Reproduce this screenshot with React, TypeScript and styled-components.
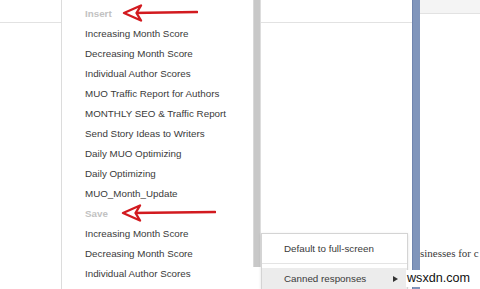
import React from 'react';
import styled, { createGlobalStyle } from 'styled-components';

const GlobalStyle = createGlobalStyle`
    html, body {
        margin: 0;
        padding: 0;
        background: #ffffff;
    }
    body {
        font-family: 'Liberation Sans', Arial, sans-serif;
        overflow: hidden;
    }
`;

const Screen = styled.div`
    position: relative;
    display: flex;
    width: 480px;
    height: 289px;
    overflow: hidden;
    background: #ffffff;
`;

const Gutter = styled.div`
    width: 61px;
    flex-shrink: 0;
`;

const TopRule = styled.div<{ $h: number; $bg?: string }>`
    height: ${(p) => p.$h}px;
    background: ${(p) => p.$bg || 'transparent'};
    border-bottom: solid 1px #e2e2e2;
`;

const Submenu = styled.div`
    width: 191px;
    flex-shrink: 0;
    padding-top: 3px;
    border-left: solid 1px #dcdcdc;
    background: #ffffff;
`;

const Item = styled.div<{ $header?: boolean }>`
    display: flex;
    align-items: center;
    height: 20px;
    padding-left: 23px;
    font-size: 9.8px;
    white-space: nowrap;
    color: ${(p) => (p.$header ? '#c2c2c2' : '#3a3a3a')};
    font-weight: ${(p) => (p.$header ? 'bold' : 'normal')};
`;

const Scrollbar = styled.div`
    width: 8px;
    flex-shrink: 0;
    display: flex;
    flex-direction: column;
`;

const Thumb = styled.div`
    height: 267px;
    background: #c8c8c8;
    border-left: solid 1px #d8d8d8;
    border-right: solid 1px #dddddd;
`;

const Middle = styled.div`
    width: 151px;
    flex-shrink: 0;
    display: flex;
    flex-direction: column;
`;

const Spacer = styled.div`
    flex: 1;
`;

const Menu = styled.div`
    width: 145px;
    border: solid 1px #d4d4d4;
    border-bottom: none;
    background: #ffffff;
    box-shadow: 0 1px 3px rgba(0, 0, 0, 0.12);
`;

const MenuItem = styled.div<{ $active?: boolean }>`
    display: flex;
    align-items: center;
    justify-content: space-between;
    height: ${(p) => (p.$active ? 21 : 29)}px;
    padding: 0 9px 0 22px;
    font-size: 9.8px;
    color: #3a3a3a;
    background: ${(p) => (p.$active ? '#ececec' : '#ffffff')};
    margin-top: ${(p) => (p.$active ? 4 : 0)}px;
`;

const Separator = styled.div`
    height: 1px;
    background: #e4e4e4;
`;

const Caret = styled.span`
    width: 0;
    height: 0;
    border-top: 3px solid transparent;
    border-bottom: 3px solid transparent;
    border-left: 5px solid #333333;
`;

const BlueBar = styled.div`
    width: 7px;
    flex-shrink: 0;
    background: #8095bb;
    border-left: solid 1px #6f84ad;
`;

const Right = styled.div`
    flex: 1;
    min-width: 0;
    display: flex;
    flex-direction: column;
`;

const BodyText = styled.div`
    margin-top: 232px;
    font-family: 'Liberation Serif', 'DejaVu Serif', serif;
    font-size: 11px;
    line-height: 14px;
    color: #3a3a3a;
    white-space: nowrap;
`;

const Watermark = styled.div`
    position: absolute;
    left: 406px;
    top: 270px;
    font-family: 'Liberation Sans', Arial, sans-serif;
    font-size: 12.6px;
    color: #111111;
    background: #ffffff;
    line-height: 17px;
    padding: 0 1px;
`;

const Arrow: React.FC<{ width: number; gap: number }> = ({ width, gap }) => (
    <svg width={width} height={20} style={{ marginLeft: gap, flexShrink: 0 }}>
        <line x1={10} y1={10} x2={width - 1} y2={9} stroke="#d21a1f" strokeWidth={2.6} strokeLinecap="round" />
        <path d="M2,10 L19,2.5 L14.5,10 L19,17.5 Z" fill="#ffffff" stroke="#d21a1f" strokeWidth={2.4} strokeLinejoin="round" />
    </svg>
);

const insertItems = [
    'Increasing Month Score',
    'Decreasing Month Score',
    'Individual Author Scores',
    'MUO Traffic Report for Authors',
    'MONTHLY SEO & Traffic Report',
    'Send Story Ideas to Writers',
    'Daily MUO Optimizing',
    'Daily Optimizing',
    'MUO_Month_Update',
];

const saveItems = ['Increasing Month Score', 'Decreasing Month Score', 'Individual Author Scores'];

export default function App() {
    return (
        <>
            <GlobalStyle />
            <Screen>
                <Gutter>
                    <TopRule $h={22} />
                </Gutter>
                <Submenu>
                    <Item $header>
                        Insert
                        <Arrow width={76} gap={10} />
                    </Item>
                    {insertItems.map((label) => (
                        <Item key={'i' + label}>{label}</Item>
                    ))}
                    <Item $header>
                        Save
                        <Arrow width={95} gap={13} />
                    </Item>
                    {saveItems.map((label) => (
                        <Item key={'s' + label}>{label}</Item>
                    ))}
                </Submenu>
                <Scrollbar>
                    <Thumb />
                </Scrollbar>
                <Middle>
                    <TopRule $h={22} />
                    <Spacer />
                    <Menu>
                        <MenuItem>Default to full-screen</MenuItem>
                        <Separator />
                        <MenuItem $active>
                            Canned responses
                            <Caret />
                        </MenuItem>
                    </Menu>
                </Middle>
                <BlueBar />
                <Right>
                    <TopRule $h={13} $bg="#f4f4f4" />
                    <BodyText>sinesses for c</BodyText>
                </Right>
                <Watermark>wsxdn.com</Watermark>
            </Screen>
        </>
    );
}
